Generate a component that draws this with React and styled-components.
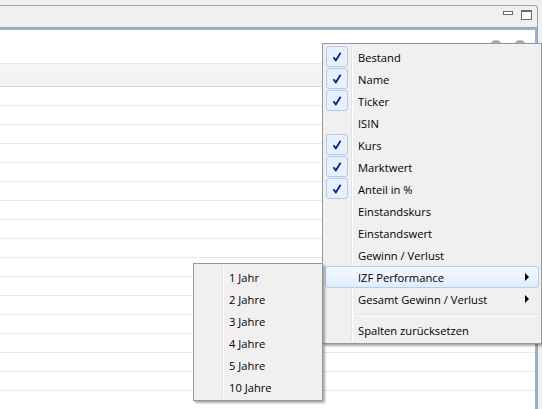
import React from 'react';
import styled, { createGlobalStyle } from 'styled-components';

const GlobalStyle = createGlobalStyle`
  html, body {
    margin: 0;
    padding: 0;
    background: #f0f0f0;
    font-family: "Open Sans", "Noto Sans", sans-serif;
    font-size: 11.2px;
    color: #000;
  }
  #root {
    height: 409px;
    overflow: hidden;
  }
`;

const Page = styled.div`
  position: relative;
  height: 409px;
  padding-top: 5px;
  box-sizing: border-box;
  overflow: hidden;
`;

const Frame = styled.div`
  margin-right: 4px;
  height: 100%;
  border-top: 1px solid #a0a0a0;
  border-right: 1px solid #a0a0a0;
  border-top-right-radius: 4px;
  display: flex;
  flex-direction: column;
`;

const TitleBar = styled.div`
  height: 23px;
  display: flex;
  align-items: flex-start;
  justify-content: flex-end;
  gap: 8px;
  padding: 4px 5px 0 0;
  box-sizing: border-box;
  border-bottom: 1px solid #a5a5a5;
`;

const MinButton = styled.div`
  width: 10px;
  height: 4px;
  margin-top: 1px;
  border: 1px solid #6a6a6a;
  box-sizing: border-box;
  background: #fff;
`;

const MaxButton = styled.div`
  width: 11px;
  height: 10px;
  border: 1px solid #6a6a6a;
  border-top-width: 2px;
  box-sizing: border-box;
  background: #fff;
`;

const Content = styled.div`
  flex: 1;
  background: #fff;
  border-top: 2px solid #97b3cf;
  border-right: 2px solid #97b3cf;
  display: flex;
  flex-direction: column;
`;

const Toolbar = styled.div`
  height: 34px;
  box-sizing: border-box;
  border-bottom: 1px solid #e6e6e6;
  display: flex;
  justify-content: flex-end;
  align-items: flex-start;
  gap: 12px;
  padding: 10px 9px 0 0;
`;

const ToolIcon = styled.div`
  width: 12px;
  height: 12px;
  border-radius: 50%;
  background: #ababab;
`;

const HeaderRow = styled.div`
  height: 23px;
  box-sizing: border-box;
  border-bottom: 1px solid #d5d5d5;
  background: linear-gradient(#f6f7f8, #eff0f2);
`;

const Row = styled.div`
  height: 19px;
  flex-shrink: 0;
  box-sizing: border-box;
  border-bottom: 1px solid #e8e8e8;
`;

const Menu = styled.div`
  position: absolute;
  left: ${p => p.$left}px;
  top: ${p => p.$top}px;
  width: ${p => p.$width}px;
  box-sizing: border-box;
  padding: 2px;
  border: 1px solid #979797;
  background: #f0f0f0;
  box-shadow: 2px 2px 2px rgba(0, 0, 0, 0.33);
  z-index: ${p => p.$z};

  &::before {
    content: '';
    position: absolute;
    left: 28px;
    top: 2px;
    bottom: 2px;
    width: 1px;
    background: #e2e3e3;
    box-shadow: 1px 0 0 #fff;
  }
`;

const Item = styled.div`
  position: relative;
  height: 22px;
  box-sizing: border-box;
  display: flex;
  align-items: center;
  padding-left: 32px;
  padding-right: 10px;
  padding-top: 2px;
  border: 1px solid ${p => (p.$active ? '#b0cff5' : 'transparent')};
  border-radius: 3px;
  background: ${p => (p.$active ? 'linear-gradient(#f3f8fe, #e2edfb)' : 'transparent')};
  white-space: nowrap;
`;

const Label = styled.span`
  flex: 1;
  line-height: 18px;
`;

const CheckBox = styled.div`
  position: absolute;
  left: 0;
  top: -1px;
  width: 22px;
  height: 21px;
  box-sizing: border-box;
  border: 1px solid #aecbf0;
  border-radius: 3px;
  background: #e8f0fb;
  display: flex;
  align-items: center;
  justify-content: center;
`;

const Arrow = styled.span`
  width: 0;
  height: 0;
  margin-top: -2px;
  border-top: 4px solid transparent;
  border-bottom: 4px solid transparent;
  border-left: 4px solid #000;
  margin-right: -1px;
`;

const Separator = styled.div`
  height: 9px;
  margin-left: 30px;
  display: flex;
  align-items: center;

  &::after {
    content: '';
    flex: 1;
    height: 1px;
    background: #e0e0e0;
    box-shadow: 0 1px 0 #fff;
  }
`;

const CheckMark = () => (
  <svg width="12" height="12" viewBox="0 0 12 12">
    <path d="M2.5 6.2 L4.8 9.5 L9.6 1.8" fill="none" stroke="#0d1f80" strokeWidth="1.8" strokeLinejoin="round" />
  </svg>
);

const columns = [
  { label: 'Bestand', checked: true },
  { label: 'Name', checked: true },
  { label: 'Ticker', checked: true },
  { label: 'ISIN' },
  { label: 'Kurs', checked: true },
  { label: 'Marktwert', checked: true },
  { label: 'Anteil in %', checked: true },
  { label: 'Einstandskurs' },
  { label: 'Einstandswert' },
  { label: 'Gewinn / Verlust' },
  { label: 'IZF Performance', sub: true, active: true },
  { label: 'Gesamt Gewinn / Verlust', sub: true },
];

const periods = ['1 Jahr', '2 Jahre', '3 Jahre', '4 Jahre', '5 Jahre', '10 Jahre'];

export default function App() {
  const rows = Array.from({ length: 17 });

  return (
    <>
      <GlobalStyle />
      <Page>
        <Frame>
          <TitleBar>
            <MinButton />
            <MaxButton />
          </TitleBar>
          <Content>
            <Toolbar>
              <ToolIcon />
              <ToolIcon />
            </Toolbar>
            <HeaderRow />
            {rows.map((_, i) => <Row key={i} />)}
          </Content>
        </Frame>

        <Menu $left={322} $top={43} $width={220} $z={1}>
          {columns.map(col => (
            <Item key={col.label} $active={col.active}>
              {col.checked && (
                <CheckBox>
                  <CheckMark />
                </CheckBox>
              )}
              <Label>{col.label}</Label>
              {col.sub && <Arrow />}
            </Item>
          ))}
          <Separator />
          <Item>
            <Label>Spalten zurücksetzen</Label>
          </Item>
        </Menu>

        <Menu $left={193} $top={263} $width={130} $z={2}>
          {periods.map(p => (
            <Item key={p}>
              <Label>{p}</Label>
            </Item>
          ))}
        </Menu>
      </Page>
    </>
  );
}
